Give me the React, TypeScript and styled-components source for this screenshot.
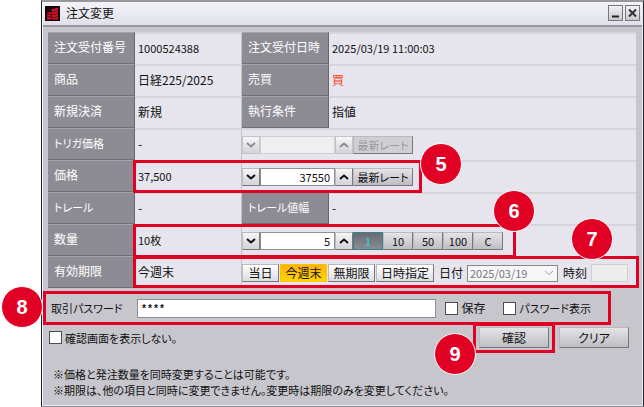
import React, { useState } from "react";
import styled, { createGlobalStyle, css } from "styled-components";

const RED = "#e10125";

const GlobalStyle = createGlobalStyle`
  *, *::before, *::after { box-sizing: border-box; }
  body {
    margin: 0;
    background: #fff;
    color: #111;
    font-family: "Noto Sans CJK JP", sans-serif;
    font-size: 12px;
    line-height: 16px;
    font-feature-settings: "palt";
  }
  button, input, select { font: inherit; font-feature-settings: inherit; color: inherit; }
`;

const Page = styled.main`
  min-height: 100vh;
  padding-left: 41px;
  display: flex;
`;

const Window = styled.section`
  flex: 1;
  display: flex;
  flex-direction: column;
  background: #c7c6cc;
  border: 1px solid #26262a;
  border-top: 2px solid #98979b;
  border-bottom-color: #8b8a90;
  box-shadow: inset 1px 0 #f4f4f8, inset -1px -1px #e9e9ef;
`;

const TitleBar = styled.header`
  display: flex;
  align-items: center;
  gap: 2px;
  height: 25px;
  margin: 0 1px;
  padding: 0 2px 1px;
  background: linear-gradient(#f3f3f9, #e0e0ea);
  border-bottom: 2px solid #97979d;
`;

const Title = styled.h1`
  flex: 1;
  margin: 0 4px;
  font-size: 12px;
  font-weight: 400;
`;

const WindowButton = styled.button`
  display: grid;
  place-items: center;
  width: 15px;
  height: 16px;
  padding: 0;
  border: 1px solid #77777c;
  background: linear-gradient(#f2f2f4, #c9c9ce);
`;

const Body = styled.div`
  flex: 1;
  padding: 5px 7px 6px 6px;
`;

const OrderTable = styled.table`
  width: 100%;
  table-layout: fixed;
  border-spacing: 0;
  background: #e6e5ed;
`;

const LabelCol = styled.col`
  width: 87px;
`;

const ValueCol = styled.col`
  width: 107px;
`;

const LabelCell = styled.th<{ $kana?: boolean }>`
  height: 32px;
  padding: 0 6px 2px;
  text-align: left;
  font-size: ${(p) => (p.$kana ? 11 : 12)}px;
  font-weight: 400;
  white-space: nowrap;
  color: #fff;
  background: #8d8c94;
  border-top: 1px solid #a5a4ab;
  border-bottom: 1px solid #707077;
  border-right: 1px solid #66666d;
`;

const ValueCell = styled.td<{ $divided?: boolean; $tone?: "buy"; $numeric?: boolean }>`
  position: relative;
  height: 32px;
  padding: 0 3px 2px;
  white-space: nowrap;
  border-top: 2px solid #d6d5db;
  font-size: ${(p) => (p.$numeric ? 11 : 12)}px;
  ${(p) => p.$divided && "border-right: 1px solid #c2c1c8;"}
  ${(p) => p.$tone === "buy" && "color: #ff3a12;"}
`;

const ControlCell = styled.td`
  height: 32px;
  padding: 0;
  border-top: 2px solid #d6d5db;
`;

const Controls = styled.div`
  display: flex;
  align-items: center;
  height: 30px;
`;

const ButtonRow = styled(Controls)`
  gap: 1px;
`;

const edge = css`
  border: 1px solid;
  border-color: #b9b9be #77777c #77777c #b9b9be;
`;

const StepButton = styled.button`
  ${edge}
  display: grid;
  place-items: center;
  width: 18px;
  height: 18px;
  padding: 0;
  background: linear-gradient(#f6f6f7, #d3d3d8);
  &:disabled { color: #8c8c90; border-color: #c4c4c8; }
`;

const NumberInput = styled.input`
  width: 75px;
  height: 18px;
  padding: 0 4px;
  border: 1px solid #8e8e93;
  border-radius: 0;
  background: #fff;
  font-size: 11px;
  text-align: right;
  &:disabled { background: #efeff0; border-color: #cfcfd3; }
`;

const FlatButton = styled.button<{ $width: number; $look?: "dark" | "gold" | "light" }>`
  ${edge}
  width: ${(p) => p.$width}px;
  height: 18px;
  padding: 0;
  line-height: 14px;
  white-space: nowrap;
  background: linear-gradient(#e4e4e7, #bdbdc3);
  &:disabled { color: #99999d; background: #d0d0d4; }
  ${(p) => p.$look === "light" && "background: linear-gradient(#ffffff, #dcdce0);"}
  ${(p) => p.$look === "gold" && "background: linear-gradient(#ffb010, #ffd500); border-color: #ffc400;"}
  ${(p) =>
    p.$look === "dark" &&
    "background: linear-gradient(#686a74, #8a8c94); color: #1cdce4; border-color: #3f7f88;"}
`;

const SmallButton = styled(FlatButton)`
  font-size: 11px;
`;

const FieldLabel = styled.label`
  display: flex;
  align-items: center;
  gap: 4px;
  margin-left: 4px;
`;

const DateSelect = styled.select`
  appearance: none;
  grid-area: 1 / 1;
  width: 91px;
  height: 17px;
  padding: 0 2px;
  border: 1px solid #88888d;
  border-radius: 0;
  background: #f6f6f7;
  font-size: 11px;
  line-height: 15px;
  &:disabled { color: #77777b; opacity: 1; }
`;

const SelectBox = styled.span`
  display: grid;
  align-items: center;
  justify-items: end;
  svg { grid-area: 1 / 1; margin-right: 4px; z-index: 1; color: #a5a5aa; }
`;

const TimeInput = styled.input`
  width: 37px;
  height: 18px;
  padding: 0 2px;
  border: 1px solid #d0d0d4;
  border-radius: 0;
  background: #ededee;
`;

const PasswordRow = styled.div`
  position: relative;
  display: flex;
  align-items: center;
  height: 34px;
  margin: 3px 25px 0 -5px;
  padding: 0 20px 0 8px;
`;

const PasswordLabel = styled.label`
  width: 86px;
  font-size: 11px;
  white-space: nowrap;
`;

const PasswordInput = styled.input`
  flex: 1;
  min-width: 0;
  height: 19px;
  padding: 2px 3px 0;
  border: 1px solid #8e8e93;
  border-radius: 0;
  background: #fff;
  font: 700 10px/16px "Liberation Mono", monospace;
`;

const CheckLabel = styled.label<{ $gap: number; $kana?: boolean }>`
  display: flex;
  align-items: center;
  gap: 3px;
  margin-left: ${(p) => p.$gap}px;
  font-size: ${(p) => (p.$kana ? 11 : 12)}px;
  white-space: nowrap;
`;

const CheckBox = styled.input.attrs({ type: "checkbox" })`
  appearance: none;
  width: 13px;
  height: 13px;
  margin: 0;
  border: 1px solid #4c4c50;
  background: #fff;
  &:checked { background: #4c4c50; box-shadow: inset 0 0 0 2px #fff; }
`;

const ActionRow = styled.div`
  display: flex;
  align-items: center;
  gap: 10px;
  height: 21px;
  margin: 2px 7px 0 1px;
`;

const Spacer = styled.div`
  flex: 1;
`;

const ActionSlot = styled.div`
  position: relative;
  display: flex;
`;

const ActionButton = styled(FlatButton)`
  height: 21px;
`;

const Notes = styled.div`
  margin: 18px 5px 0;
  font-size: 11px;
  line-height: 16px;
  p { margin: 0; }
`;

/* Highlight frames and numbered badges lie over the form. */
const Frame = styled.span`
  position: absolute;
  z-index: 2;
  pointer-events: none;
  box-shadow: inset 0 0 0 3px ${RED};
`;

const PriceFrame = styled(Frame)`
  top: -2px;
  left: -2px;
  width: 289px;
  height: 33px;
`;

const QuantityFrame = styled(Frame)`
  top: -2px;
  left: -2px;
  width: 383px;
  height: 34px;
`;

const ExpiryFrame = styled(Frame)`
  top: 0;
  right: -3px;
  bottom: 0;
  left: 85px;
`;

const PasswordFrame = styled(Frame)`
  inset: 0;
`;

const ConfirmFrame = styled(Frame)`
  inset: -4px -6px -5px;
`;

const ExpiryAnchor = styled.tr`
  position: relative;
`;

const Badge = styled.b`
  position: absolute;
  z-index: 3;
  display: grid;
  place-items: center;
  width: 42px;
  height: 42px;
  border: 1px solid #fff;
  border-radius: 50%;
  background: ${RED};
  color: #fff;
  font: 700 20px/20px "Liberation Sans", Arial, sans-serif;
`;

const PriceBadge = styled(Badge)`
  top: -17px;
  right: -40px;
`;
const QuantityBadge = styled(Badge)`
  top: -34px;
  right: -19px;
`;
const ExpiryBadge = styled(Badge)`
  top: -38px;
  right: 26px;
`;
const PasswordBadge = styled(Badge)`
  top: -5px;
  left: -42px;
`;
const ConfirmBadge = styled(Badge)`
  top: 10px;
  left: -39px;
`;

const Chevron = ({ up, thin }: { up?: boolean; thin?: boolean }) => (
  <svg width="10" height="8" viewBox="0 0 10 8" fill="none" stroke="currentColor" strokeWidth={thin ? 1 : 2}>
    <path d={up ? "M1 6 L5 2.5 L9 6" : "M1 2 L5 5.5 L9 2"} />
  </svg>
);

const Logo = () => (
  <svg width="15" height="15" viewBox="0 0 15 15">
    <rect width="15" height="15" fill="#150709" />
    <path
      fill="#d8122c"
      d="M6.5 3.6 L13 1.6 V4.2 L6.5 5.9Z M6.5 6.5 L13 4.8 V7.3 L6.5 8.7Z M6.5 9.3 L13 7.9 V10.4 L6.5 11.3Z M6.5 11.9 L13 11 V13.6 H6.5Z M2 6.9 L6 5.7 V7.6 L2 8.6Z M2 9.2 L6 8.2 V10.1 L2 11Z M2 11.6 L6 10.7 V13.6 H2Z"
    />
  </svg>
);

const Stepper = ({ label, initial, disabled }: { label: string; initial: string; disabled?: boolean }) => {
  const [value, setValue] = useState(initial);
  const step = (by: number) => setValue((v) => String(Math.max(0, Number(v) + by)));
  return (
    <>
      <StepButton disabled={disabled} aria-label={`${label} −`} onClick={() => step(-1)}>
        <Chevron />
      </StepButton>
      <NumberInput
        aria-label={label}
        value={value}
        disabled={disabled}
        onChange={(e) => setValue(e.target.value)}
      />
      <StepButton disabled={disabled} aria-label={`${label} +`} onClick={() => step(1)}>
        <Chevron up />
      </StepButton>
    </>
  );
};

const amounts = ["1", "10", "50", "100", "C"];

const periods = [
  { name: "当日", width: 37 },
  { name: "今週末", width: 47 },
  { name: "無期限", width: 47 },
  { name: "日時指定", width: 58 },
];

export default function App() {
  const [amount, setAmount] = useState("1");
  const [period, setPeriod] = useState("今週末");

  return (
    <Page>
      <GlobalStyle />
      <Window>
        <TitleBar>
          <Logo />
          <Title>注文変更</Title>
          <WindowButton aria-label="最小化">
            <svg width="9" height="10" viewBox="0 0 9 10">
              <path d="M1 8.5 H8" stroke="#222" strokeWidth="2" />
            </svg>
          </WindowButton>
          <WindowButton aria-label="閉じる">
            <svg width="9" height="10" viewBox="0 0 9 10">
              <path d="M1 1.5 L8 8.5 M8 1.5 L1 8.5" stroke="#333" strokeWidth="2" />
            </svg>
          </WindowButton>
        </TitleBar>
        <Body>
          <OrderTable>
            <colgroup>
              <LabelCol />
              <ValueCol />
              <LabelCol />
              <col />
            </colgroup>
            <tbody>
              <tr>
                <LabelCell scope="row">注文受付番号</LabelCell>
                <ValueCell $divided $numeric>1000524388</ValueCell>
                <LabelCell scope="row">注文受付日時</LabelCell>
                <ValueCell $numeric>2025/03/19 11:00:03</ValueCell>
              </tr>
              <tr>
                <LabelCell scope="row">商品</LabelCell>
                <ValueCell $divided>日経225/2025</ValueCell>
                <LabelCell scope="row">売買</LabelCell>
                <ValueCell $tone="buy">買</ValueCell>
              </tr>
              <tr>
                <LabelCell scope="row">新規決済</LabelCell>
                <ValueCell $divided>新規</ValueCell>
                <LabelCell scope="row">執行条件</LabelCell>
                <ValueCell>指値</ValueCell>
              </tr>
              <tr>
                <LabelCell scope="row" $kana>トリガ価格</LabelCell>
                <ValueCell $divided>-</ValueCell>
                <ControlCell colSpan={2}>
                  <Controls>
                    <Stepper label="トリガ価格" initial="" disabled />
                    <SmallButton $width={60} disabled>最新レート</SmallButton>
                  </Controls>
                </ControlCell>
              </tr>
              <tr>
                <LabelCell scope="row">価格</LabelCell>
                <ValueCell $divided $numeric>
                  37,500
                  <PriceFrame>
                    <PriceBadge>5</PriceBadge>
                  </PriceFrame>
                </ValueCell>
                <ControlCell colSpan={2}>
                  <Controls>
                    <Stepper label="価格" initial="37550" />
                    <SmallButton $width={60}>最新レート</SmallButton>
                  </Controls>
                </ControlCell>
              </tr>
              <tr>
                <LabelCell scope="row" $kana>トレール</LabelCell>
                <ValueCell $divided>-</ValueCell>
                <LabelCell scope="row" $kana>トレール値幅</LabelCell>
                <ValueCell>-</ValueCell>
              </tr>
              <tr>
                <LabelCell scope="row">数量</LabelCell>
                <ValueCell $divided $numeric>
                  10枚
                  <QuantityFrame>
                    <QuantityBadge>6</QuantityBadge>
                  </QuantityFrame>
                </ValueCell>
                <ControlCell colSpan={2}>
                  <Controls>
                    <Stepper label="数量" initial="5" />
                    {amounts.map((a) => (
                      <SmallButton
                        key={a}
                        $width={30}
                        $look={a === amount ? "dark" : undefined}
                        onClick={() => setAmount(a)}
                      >
                        {a}
                      </SmallButton>
                    ))}
                  </Controls>
                </ControlCell>
              </tr>
              <ExpiryAnchor>
                <LabelCell scope="row">
                  有効期限
                  <ExpiryFrame>
                    <ExpiryBadge>7</ExpiryBadge>
                  </ExpiryFrame>
                </LabelCell>
                <ValueCell $divided>今週末</ValueCell>
                <ControlCell colSpan={2}>
                  <ButtonRow>
                    {periods.map((p) => (
                      <FlatButton
                        key={p.name}
                        $width={p.width}
                        $look={p.name === period ? "gold" : "light"}
                        onClick={() => setPeriod(p.name)}
                      >
                        {p.name}
                      </FlatButton>
                    ))}
                    <FieldLabel>
                      日付
                      <SelectBox>
                        <DateSelect disabled>
                          <option>2025/03/19</option>
                        </DateSelect>
                        <Chevron thin />
                      </SelectBox>
                    </FieldLabel>
                    <FieldLabel>
                      時刻
                      <TimeInput disabled />
                    </FieldLabel>
                  </ButtonRow>
                </ControlCell>
              </ExpiryAnchor>
            </tbody>
          </OrderTable>

          <PasswordRow>
            <PasswordLabel htmlFor="password">取引パスワード</PasswordLabel>
            <PasswordInput id="password" defaultValue="****" />
            <CheckLabel $gap={9}>
              <CheckBox />
              保存
            </CheckLabel>
            <CheckLabel $gap={18} $kana>
              <CheckBox />
              パスワード表示
            </CheckLabel>
            <PasswordFrame>
              <PasswordBadge>8</PasswordBadge>
            </PasswordFrame>
          </PasswordRow>

          <ActionRow>
            <CheckLabel $gap={0} $kana>
              <CheckBox />
              確認画面を表示しない。
            </CheckLabel>
            <Spacer />
            <ActionSlot>
              <ActionButton $width={70}>確認</ActionButton>
              <ConfirmFrame>
                <ConfirmBadge>9</ConfirmBadge>
              </ConfirmFrame>
            </ActionSlot>
            <ActionButton $width={70}>クリア</ActionButton>
          </ActionRow>

          <Notes>
            <p>※価格と発注数量を同時変更することは可能です。</p>
            <p>※期限は、他の項目と同時に変更できません。変更時は期限のみを変更してください。</p>
          </Notes>
        </Body>
      </Window>
    </Page>
  );
}
